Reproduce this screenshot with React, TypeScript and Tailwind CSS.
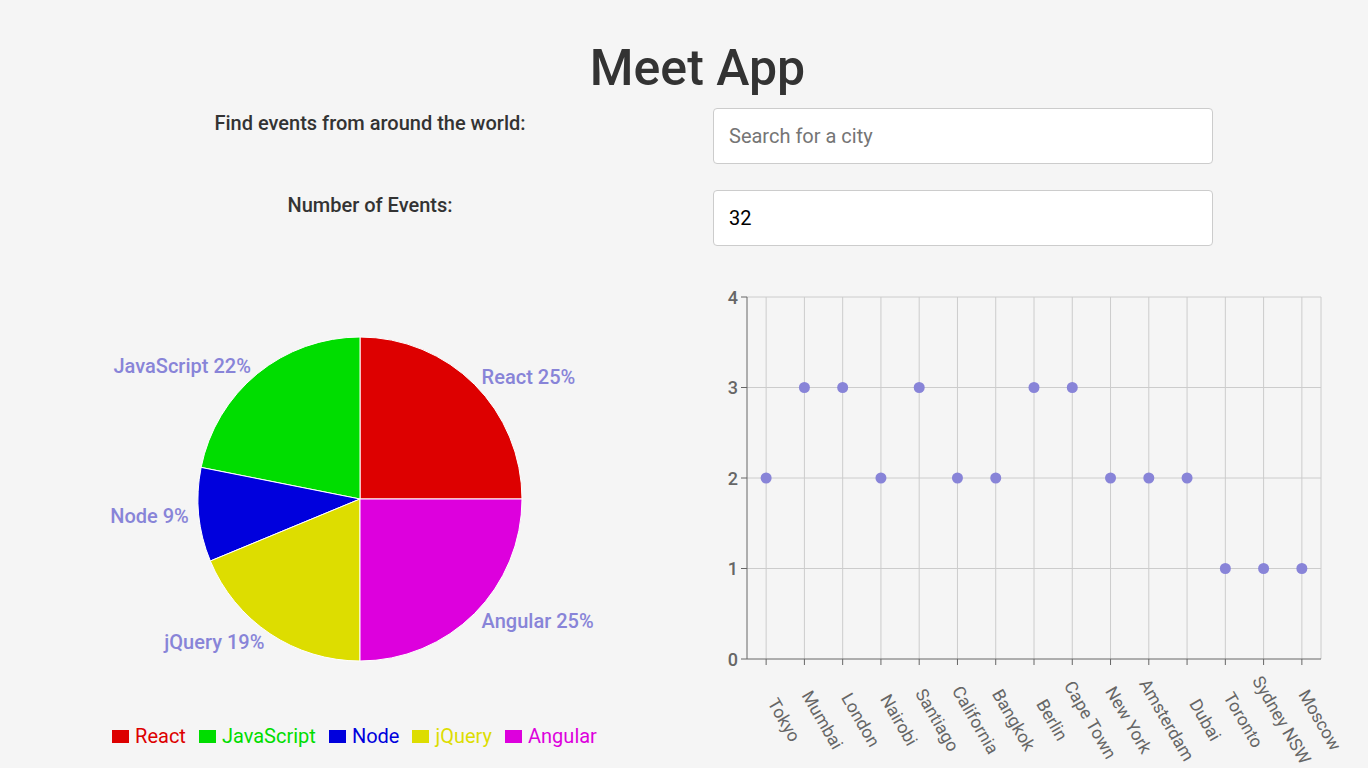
import React from "react";

const slices = [
  { name: "React", value: 8, color: "#dd0000" },
  { name: "JavaScript", value: 7, color: "#00dd00" },
  { name: "Node", value: 3, color: "#0000dd" },
  { name: "jQuery", value: 6, color: "#dddd00" },
  { name: "Angular", value: 8, color: "#dd00dd" },
];

const cities = [
  { city: "Tokyo", count: 2 },
  { city: "Mumbai", count: 3 },
  { city: "London", count: 3 },
  { city: "Nairobi", count: 2 },
  { city: "Santiago", count: 3 },
  { city: "California", count: 2 },
  { city: "Bangkok", count: 2 },
  { city: "Berlin", count: 3 },
  { city: "Cape Town", count: 3 },
  { city: "New York", count: 2 },
  { city: "Amsterdam", count: 2 },
  { city: "Dubai", count: 2 },
  { city: "Toronto", count: 1 },
  { city: "Sydney NSW", count: 1 },
  { city: "Moscow", count: 1 },
];

function EventGenresChart() {
  const cx = 360;
  const cy = 219;
  const r = 162;
  const total = slices.reduce((s, d) => s + d.value, 0);
  let start = 0;
  const rad = Math.PI / 180;

  return (
    <svg width={684} height={444} className="block">
      {slices.map((d) => {
        const sweep = (d.value / total) * 360;
        const a0 = start;
        const a1 = start + sweep;
        start = a1;
        const x0 = cx + r * Math.cos(a0 * rad);
        const y0 = cy - r * Math.sin(a0 * rad);
        const x1 = cx + r * Math.cos(a1 * rad);
        const y1 = cy - r * Math.sin(a1 * rad);
        const mid = (a0 + a1) / 2;
        const lx = cx + 172 * Math.cos(mid * rad);
        const ly = cy - 172 * Math.sin(mid * rad);
        const pct = Math.round((d.value / total) * 100);
        return (
          <g key={d.name}>
            <path
              d={`M${cx},${cy} L${x0},${y0} A${r},${r} 0 ${sweep > 180 ? 1 : 0} 0 ${x1},${y1} Z`}
              fill={d.color}
              stroke="#fff"
              strokeWidth={1}
            />
            <text
              x={lx}
              y={ly}
              fill="#8884d8"
              fontSize={20}
              fontWeight={500}
              textAnchor={lx > cx ? "start" : "end"}
              dominantBaseline="central"
            >
              {d.name} {pct}%
            </text>
          </g>
        );
      })}
    </svg>
  );
}

function EventsScatter() {
  const left = 63;
  const right = 637;
  const top = 17;
  const bottom = 379;
  const step = (right - left) / cities.length;
  const yOf = (v: number) => bottom - v * ((bottom - top) / 4);

  return (
    <svg width={684} height={488} className="block">
      {[1, 2, 3, 4].map((v) => (
        <line key={v} x1={left} x2={right} y1={yOf(v)} y2={yOf(v)} stroke="#ccc" />
      ))}
      {cities.map((c, i) => {
        const x = left + step * (i + 0.5);
        return <line key={c.city} x1={x} x2={x} y1={top} y2={bottom} stroke="#ccc" />;
      })}
      <line x1={right} x2={right} y1={top} y2={bottom} stroke="#ccc" />

      <line x1={left} x2={left} y1={top} y2={bottom} stroke="#666" />
      <line x1={left} x2={right} y1={bottom} y2={bottom} stroke="#666" />

      {[0, 1, 2, 3, 4].map((v) => (
        <g key={v}>
          <line x1={left - 6} x2={left} y1={yOf(v)} y2={yOf(v)} stroke="#666" />
          <text
            x={left - 9}
            y={yOf(v)}
            fontSize={18}
            fontWeight={500}
            fill="#666"
            textAnchor="end"
            dominantBaseline="central"
          >
            {v}
          </text>
        </g>
      ))}

      {cities.map((c, i) => {
        const x = left + step * (i + 0.5);
        const tx = x + 18;
        const ty = 440;
        return (
          <g key={c.city}>
            <line x1={x} x2={x} y1={bottom} y2={bottom + 6} stroke="#666" />
            <text
              x={tx}
              y={ty}
              fontSize={17.5}
              fill="#666"
              textAnchor="middle"
              dominantBaseline="central"
              transform={`rotate(60, ${tx}, ${ty})`}
            >
              {c.city}
            </text>
            <circle cx={x} cy={yOf(c.count)} r={5.5} fill="#8884d8" />
          </g>
        );
      })}
    </svg>
  );
}

export default function App() {
  return (
    <div className="min-h-screen overflow-hidden bg-[#f5f5f5] font-['Roboto','Liberation_Sans',sans-serif] text-[#333]">
      <h1 className="pt-[38px] pl-[27px] text-center text-[50px] leading-[60px] font-medium">Meet App</h1>

      <div className="mt-[10px] flex">
        <div className="ml-[56px] w-[628px] text-center text-[20px] leading-[30px] font-medium">
          Find events from around the world:
        </div>
        <div className="ml-[29px] w-[500px]">
          <input
            type="text"
            placeholder="Search for a city"
            className="h-[56px] w-full rounded-[4px] border border-[#cccccc] bg-white px-[15px] text-[20px] text-black placeholder:text-[#757575] outline-none"
          />
        </div>
      </div>

      <div className="mt-[26px] flex">
        <div className="ml-[56px] w-[628px] text-center text-[20px] leading-[30px] font-medium">
          Number of Events:
        </div>
        <div className="ml-[29px] w-[500px]">
          <input
            type="number"
            defaultValue={32}
            className="h-[56px] w-full rounded-[4px] border border-[#cccccc] bg-white px-[15px] text-[20px] text-black outline-none"
          />
        </div>
      </div>

      <div className="mt-[34px] flex">
        <div className="w-[684px]">
          <EventGenresChart />
          <div className="flex justify-center gap-[13px] pl-[25px] text-[20px] leading-[24px]">
            {slices.map((s) => (
              <div key={s.name} className="flex items-center gap-[6px]">
                <span className="inline-block h-[13px] w-[17px]" style={{ backgroundColor: s.color }} />
                <span style={{ color: s.color }}>{s.name}</span>
              </div>
            ))}
          </div>
        </div>
        <div className="w-[684px]">
          <EventsScatter />
        </div>
      </div>
    </div>
  );
}
